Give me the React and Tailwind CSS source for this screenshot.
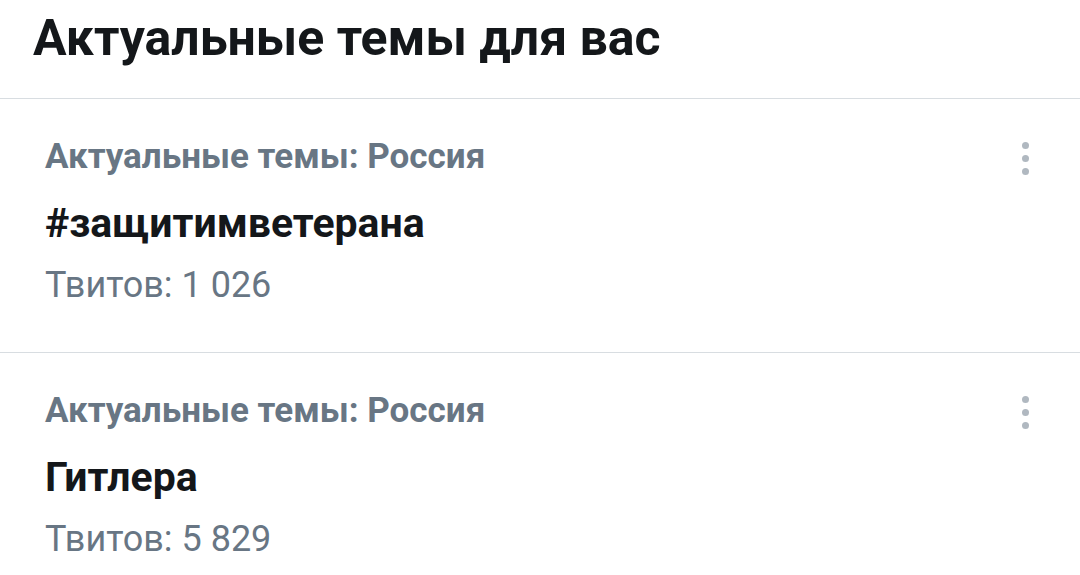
export default function App() {
  const items = [
    { ctx: "Актуальные темы: Россия", name: "#защитимветерана", count: "Твитов: 1 026" },
    { ctx: "Актуальные темы: Россия", name: "Гитлера", count: "Твитов: 5 829" },
  ];
  return (
    <div className="w-[1080px] h-[575px] overflow-hidden bg-white" style={{ fontFamily: "Roboto, 'Noto Sans', sans-serif" }}>
      <div className="h-[99px] border-b border-[#d8dde1] pl-[33px] pt-[8px]">
        <h1 className="text-[50px] leading-[60px] font-bold text-[#14171a]">Актуальные темы для вас</h1>
      </div>
      {items.map((it, i) => (
        <div key={i} className="relative h-[254px] border-b border-[#d8dde1] pl-[45px] pt-[36px]">
          <div className="text-[35px] leading-[44px] font-bold text-[#687684]">{it.ctx}</div>
          <div className="mt-[14px] text-[41px] leading-[60px] font-bold text-[#14171a]">{it.name}</div>
          <div className="mt-[2px] text-[36px] leading-[60px] text-[#687684]">{it.count}</div>
          <div className="absolute right-[51px] top-[43px] flex flex-col gap-[6px]">
            <span className="block w-[7px] h-[7px] rounded-full bg-[#b0b8c0]" />
            <span className="block w-[7px] h-[7px] rounded-full bg-[#b0b8c0]" />
            <span className="block w-[7px] h-[7px] rounded-full bg-[#b0b8c0]" />
          </div>
        </div>
      ))}
    </div>
  );
}
